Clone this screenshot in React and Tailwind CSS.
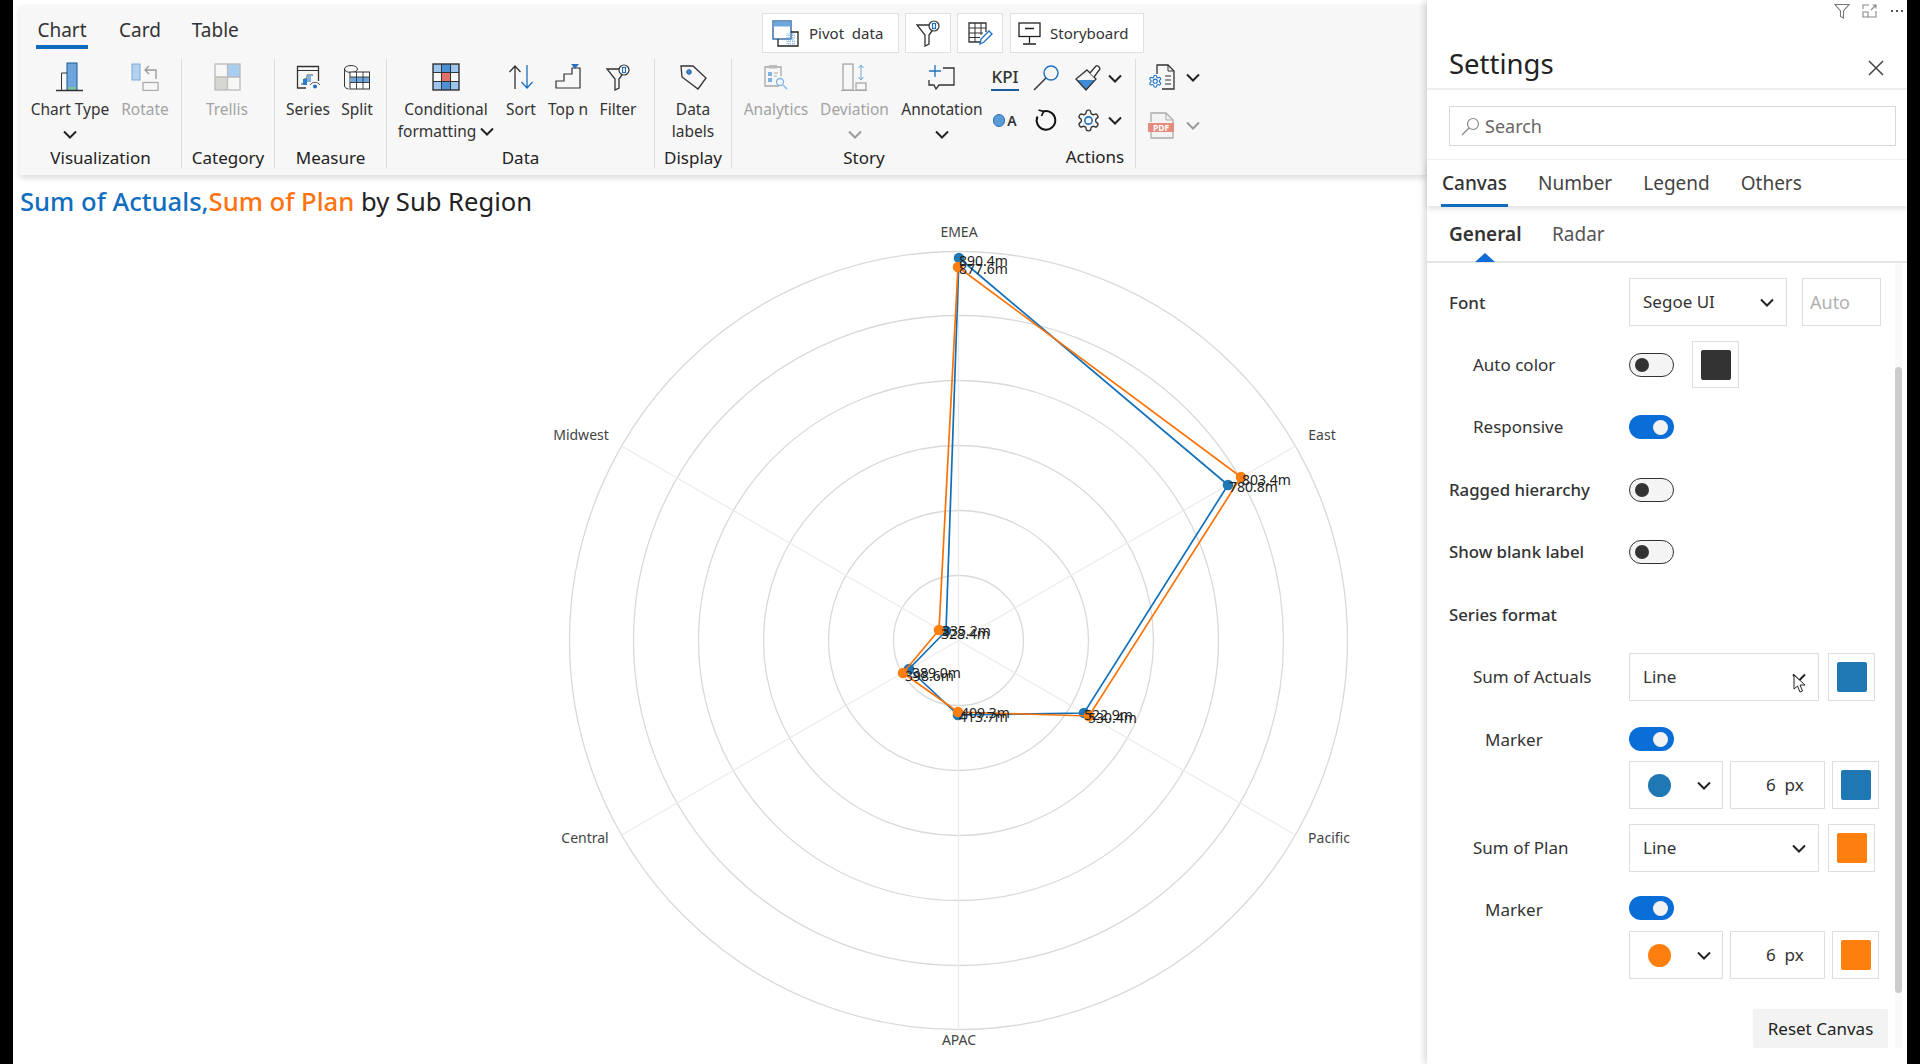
import React from "react";

const BLUE = "#1f77b4";
const ORANGE = "#ff7f0e";

const Chevron = ({ muted }) => (
  <svg width="14" height="9" viewBox="0 0 14 9" fill="none" stroke={muted ? "#999" : "#222"} strokeWidth="2">
    <path d="M1 1.5l6 6 6-6" />
  </svg>
);

// ribbon icons
const ChartTypeIcon = () => (
  <svg width="28" height="30" viewBox="0 0 28 30" fill="none">
    <rect x="11" y="1" width="10" height="27" fill="#6ea6dc" stroke="#1b5a9a" />
    <rect x="12" y="25" width="8" height="3" fill="#7fc49a" />
    <path d="M5.5 28V11H11" stroke="#333" />
    <path d="M0 28.5h27" stroke="#333" strokeWidth="1.5" />
  </svg>
);
const RotateIcon = () => (
  <svg width="29" height="28" viewBox="0 0 29 28" fill="none">
    <rect x="1" y="1" width="8" height="16" fill="#b4d2f0" stroke="#7aa8d4" />
    <path d="M25 16V7H14M18 3l-4 4 4 4" stroke="#999" strokeWidth="1.3" />
    <rect x="12" y="19.5" width="15" height="8" stroke="#aaa" strokeWidth="1.3" />
  </svg>
);
const TrellisIcon = () => (
  <svg width="27" height="28" viewBox="0 0 27 28" fill="none">
    <rect x="13.5" y="1" width="12.5" height="13" fill="#a9cdef" />
    <rect x="1" y="14" width="12.5" height="13" fill="#d8d6d3" />
    <rect x="1" y="1" width="25" height="26" stroke="#bbb" strokeWidth="1.3" />
    <path d="M13.5 1v26M1 14h25" stroke="#bbb" strokeWidth="1.3" />
  </svg>
);
const SeriesIcon = () => (
  <svg width="25" height="25" viewBox="0 0 25 25" fill="none">
    <path d="M10 23H1.5V1.5h21V16" stroke="#333" strokeWidth="1.3" />
    <path d="M1.5 5.5h21" stroke="#333" />
    <path d="M5 19h3v-5h3v-4h6" stroke="#444" />
    <rect x="7" y="14" width="4" height="6" fill="#2b7cc9" />
    <rect x="11" y="10" width="4" height="7" fill="#7fb2e5" />
    <circle cx="19" cy="21.5" r="2" fill="#1d6fc2" />
    <path d="M14 20a6 6 0 0 1 10 0" stroke="#555" />
  </svg>
);
const SplitIcon = () => (
  <svg width="28" height="27" viewBox="0 0 28 27" fill="none">
    <ellipse cx="8" cy="5" rx="6.5" ry="3.5" stroke="#333" />
    <path d="M1.5 5v17c0 1.5 2 2.5 4 3" stroke="#333" />
    <rect x="7" y="8" width="19.5" height="17" fill="#fff" stroke="#333" />
    <rect x="7.5" y="13" width="18.5" height="5.5" fill="#6ea6dc" />
    <path d="M13.5 8v17M20 8v17M7 13h19.5M7 18.5h19.5" stroke="#333" strokeWidth=".9" />
  </svg>
);
const CondIcon = () => (
  <svg width="28" height="28" viewBox="0 0 28 28" fill="none">
    <rect x="9.5" y="1" width="9" height="26" fill="#4c90d6" />
    <rect x="1" y="1" width="8.5" height="8.5" fill="#9cc6ee" />
    <rect x="18.5" y="1" width="8.5" height="8.5" fill="#9cc6ee" />
    <rect x="1" y="18.5" width="8.5" height="8.5" fill="#9cc6ee" />
    <rect x="18.5" y="18.5" width="8.5" height="8.5" fill="#9cc6ee" />
    <rect x="9.5" y="10" width="9" height="8" fill="#e2706a" />
    <rect x="1" y="1" width="26" height="26" stroke="#333" strokeWidth="1.4" />
    <path d="M9.5 1v26M18.5 1v26M1 9.5h26M1 18.5h26" stroke="#333" />
  </svg>
);
const SortIcon = () => (
  <svg width="26" height="26" viewBox="0 0 26 26" fill="none" strokeWidth="1.3">
    <path d="M7 25V2M1.5 8L7 2l5.5 6" stroke="#333" />
    <path d="M19 1v23M13.5 18l5.5 6 5.5-6" stroke="#1d6fc2" />
  </svg>
);
const TopNIcon = () => (
  <svg width="27" height="26" viewBox="0 0 27 26" fill="none">
    <path d="M1 25v-7h8v-7h8V5h8v20z" stroke="#333" strokeWidth="1.2" transform="translate(0 -1)" />
    <path d="M16 0h8l-4 5z" fill="#2b6fb8" />
  </svg>
);
const FunnelLens = ({ blue = "#1d6fc2" }) => (
  <svg width="25" height="27" viewBox="0 0 25 27" fill="none">
    <path d="M14 5H1l8 10v11l4-2v-9l3-4" stroke="#333" strokeWidth="1.3" />
    <circle cx="18" cy="6" r="5" fill="#fff" stroke="#333" strokeWidth="1.2" />
    <rect x="16.5" y="3.5" width="3" height="5" fill="#fff" stroke={blue} strokeWidth="1.2" />
  </svg>
);
const TagIcon = () => (
  <svg width="29" height="25" viewBox="0 0 29 25" fill="none">
    <path d="M2 1h12l13 12-8 11L3 12z" stroke="#333" strokeWidth="1.3" />
    <circle cx="10" cy="7" r="2.3" fill="#3f8bd6" stroke="#1d5c9e" />
  </svg>
);
const AnalyticsIcon = () => (
  <svg width="26" height="26" viewBox="0 0 26 26" fill="none">
    <path d="M16 22H2V3h16v9" stroke="#a8a8a8" strokeWidth="1.3" />
    <rect x="6" y="1" width="8" height="3.5" fill="#bbb" />
    <rect x="5" y="8" width="4" height="4" fill="#7fb2e5" />
    <rect x="5" y="14" width="4" height="4" fill="#7fb2e5" />
    <path d="M11 9h4M11 12h3" stroke="#aaa" />
    <circle cx="17" cy="18" r="3.5" stroke="#7fb2e5" strokeWidth="1.3" />
    <path d="M20 21l4 4" stroke="#7fb2e5" strokeWidth="1.3" />
  </svg>
);
const DeviationIcon = () => (
  <svg width="27" height="28" viewBox="0 0 27 28" fill="none">
    <rect x="2" y="1" width="10" height="26" stroke="#a8a8a8" strokeWidth="1.3" />
    <rect x="15" y="20" width="10" height="7" stroke="#a8a8a8" strokeWidth="1.3" />
    <path d="M0 27.5h26" stroke="#a8a8a8" />
    <path d="M20 2v15M17.5 5L20 2l2.5 3M17.5 14l2.5 3 2.5-3" stroke="#6ea6dc" />
  </svg>
);
const AnnotationIcon = () => (
  <svg width="28" height="26" viewBox="0 0 28 26" fill="none">
    <path d="M15 4h11v17H11l-3 4-2-4H1v-5" stroke="#333" strokeWidth="1.3" />
    <path d="M7 1v12M1 7h12" stroke="#1d6fc2" strokeWidth="1.3" />
  </svg>
);
const LensIcon = () => (
  <svg width="26" height="26" viewBox="0 0 26 26" fill="none">
    <circle cx="18" cy="8" r="7" stroke="#1d6fc2" strokeWidth="1.4" />
    <path d="M13 13L1 25" stroke="#333" strokeWidth="1.4" />
  </svg>
);
const BrushIcon = () => (
  <svg width="26" height="26" viewBox="0 0 26 26" fill="none">
    <path d="M2.5 15h17L11 25z" fill="#3f8bd6" />
    <path d="M12 5l9 9-10 11L1 14z" stroke="#333" strokeWidth="1.3" />
    <path d="M15 8l6-7c1-1 4 1 4 3l-6 8" fill="#fff" stroke="#333" strokeWidth="1.3" />
  </svg>
);
const RefreshIcon = () => (
  <svg width="24" height="24" viewBox="0 0 24 24" fill="none" stroke="#111" strokeWidth="2">
    <path d="M9 3.5a9.3 9.3 0 1 1-5.5 5" />
    <path d="M4.5 2L9.5 3.5 7.5 8" strokeWidth="1.7" />
  </svg>
);
const GearIcon = ({ size = 24 }) => (
  <svg width={size} height={size} viewBox="0 0 24 24" fill="none" stroke="#333" strokeWidth="1.3">
    <path d="M12.22 2h-.44a2 2 0 0 0-2 2v.18a2 2 0 0 1-1 1.73l-.43.25a2 2 0 0 1-2 0l-.15-.08a2 2 0 0 0-2.73.73l-.22.38a2 2 0 0 0 .73 2.73l.15.1a2 2 0 0 1 1 1.72v.51a2 2 0 0 1-1 1.74l-.15.09a2 2 0 0 0-.73 2.73l.22.38a2 2 0 0 0 2.73.73l.15-.08a2 2 0 0 1 2 0l.43.25a2 2 0 0 1 1 1.73V20a2 2 0 0 0 2 2h.44a2 2 0 0 0 2-2v-.18a2 2 0 0 1 1-1.73l.43-.25a2 2 0 0 1 2 0l.15.08a2 2 0 0 0 2.73-.73l.22-.39a2 2 0 0 0-.73-2.73l-.15-.08a2 2 0 0 1-1-1.74v-.5a2 2 0 0 1 1-1.74l.15-.09a2 2 0 0 0 .73-2.73l-.22-.38a2 2 0 0 0-2.73-.73l-.15.08a2 2 0 0 1-2 0l-.43-.25a2 2 0 0 1-1-1.73V4a2 2 0 0 0-2-2z" />
    <circle cx="12" cy="12" r="3.5" stroke="#1d6fc2" strokeWidth="1.5" />
  </svg>
);
const DocGearIcon = () => (
  <svg width="28" height="26" viewBox="0 0 28 26" fill="none">
    <path d="M9 10V1h11l6 6v18H14" stroke="#333" strokeWidth="1.3" />
    <path d="M20 1v6h6M17 12h6M17 16h6M17 20h6" stroke="#333" />
    <g transform="translate(0 10) scale(.6)">
      <path d="M12.22 2h-.44a2 2 0 0 0-2 2v.18a2 2 0 0 1-1 1.73l-.43.25a2 2 0 0 1-2 0l-.15-.08a2 2 0 0 0-2.73.73l-.22.38a2 2 0 0 0 .73 2.73l.15.1a2 2 0 0 1 1 1.72v.51a2 2 0 0 1-1 1.74l-.15.09a2 2 0 0 0-.73 2.73l.22.38a2 2 0 0 0 2.73.73l.15-.08a2 2 0 0 1 2 0l.43.25a2 2 0 0 1 1 1.73V20a2 2 0 0 0 2 2h.44a2 2 0 0 0 2-2v-.18a2 2 0 0 1 1-1.73l.43-.25a2 2 0 0 1 2 0l.15.08a2 2 0 0 0 2.73-.73l.22-.39a2 2 0 0 0-.73-2.73l-.15-.08a2 2 0 0 1-1-1.74v-.5a2 2 0 0 1 1-1.74l.15-.09a2 2 0 0 0 .73-2.73l-.22-.38a2 2 0 0 0-2.73-.73l-.15.08a2 2 0 0 1-2 0l-.43-.25a2 2 0 0 1-1-1.73V4a2 2 0 0 0-2-2z" fill="#fff" stroke="#1d6fc2" strokeWidth="1.8" />
      <circle cx="12" cy="12" r="3.5" stroke="#1d6fc2" strokeWidth="1.8" />
    </g>
  </svg>
);
const PdfIcon = () => (
  <svg width="28" height="27" viewBox="0 0 28 27" fill="none">
    <path d="M3 10V1h15l7 7v18H3v-6" fill="#f3f3f3" stroke="#aaa" strokeWidth="1.3" />
    <path d="M18 1v7h7" stroke="#aaa" />
    <rect x="0" y="11" width="26" height="9" fill="#e58a7c" />
    <text x="13" y="18.5" textAnchor="middle" fontSize="8.5" fontWeight="700" fill="#fff">PDF</text>
  </svg>
);
const PivotIcon = () => (
  <svg width="27" height="27" viewBox="0 0 27 27" fill="none">
    <rect x="1" y="1" width="18" height="18" fill="#fff" stroke="#1d5c9e" strokeWidth="1.3" />
    <rect x="1.5" y="1.5" width="17" height="5" fill="#6ea6dc" />
    <path d="M6 19v7h20V12h-7" stroke="#222" strokeWidth="1.3" />
    <path d="M16 15h8M16 18h8M16 21h8M16 24h8M15 13v11M18 13v11M21 13v11" stroke="#6ea6dc" strokeDasharray="1 1" />
  </svg>
);
const TableEditIcon = () => (
  <svg width="25" height="23" viewBox="0 0 25 23" fill="none">
    <path d="M12 20H1V1h17v9" stroke="#333" strokeWidth="1.3" />
    <path d="M1 6h17M1 11h14M1 15.5h11M7 1v19M13 1v12" stroke="#333" />
    <path d="M12 22l1-5 8-8 3 3-8 8z" fill="#fff" stroke="#1d6fc2" strokeWidth="1.3" />
  </svg>
);
const BoardIcon = () => (
  <svg width="23" height="23" viewBox="0 0 23 23" fill="none" stroke="#222" strokeWidth="1.3">
    <rect x="1" y="1" width="21" height="13.5" />
    <path d="M7 6.5h9M11.5 14.5V21M5 22h13" />
  </svg>
);

const Tool = ({ w, icon, label, second, chevron, muted }) => (
  <div className={`flex flex-col items-center ${w}`}>
    <div className="h-[36px] flex items-center justify-center">{icon}</div>
    <div className={`mt-[3px] leading-[22px] whitespace-nowrap text-center ${muted ? "text-[#a3a3a3]" : "text-[#333]"}`}>
      {label}
      {second && <div>{second}</div>}
    </div>
    {chevron && (
      <div className="mt-[7px] h-[14px] flex items-center">
        <Chevron muted={muted} />
      </div>
    )}
  </div>
);

const Group = ({ className, label, labelClass, children }) => (
  <div className={`h-[109px] flex flex-col ${className}`}>
    <div className="h-[89px] flex">{children}</div>
    <div className={`h-[20px] leading-[20px] text-center text-[17px] text-[#222] whitespace-nowrap ${labelClass || ""}`}>{label}</div>
  </div>
);

const TopButton = ({ className, children }) => (
  <div className={`h-[40px] bg-white border border-[#e0e0e0] flex items-center text-[15px] text-[#333] ${className}`}>{children}</div>
);

const Ribbon = () => (
  <div className="mt-[5px] h-[170px] bg-[#f7f7f7] shadow-[0_3px_6px_rgba(0,0,0,0.14)] text-[15.5px] relative z-[1]">
    <div className="h-[54px] flex">
      <div className="w-[742px] flex pl-[16px] text-[19px] text-[#333]">
        <div className="h-[44px] w-[52px] pt-[13px] leading-[24px] text-center border-b-4 border-[#0f6cbd]">Chart</div>
        <div className="h-[44px] ml-[31px] pt-[13px] leading-[24px]">Card</div>
        <div className="h-[44px] ml-[31px] pt-[13px] leading-[24px]">Table</div>
      </div>
      <div className="flex gap-[6px] mt-[8px]">
        <TopButton className="w-[137px] pl-[9px]">
          <PivotIcon />
          <span className="ml-[10px] mt-[1px] whitespace-pre">Pivot  data</span>
        </TopButton>
        <TopButton className="w-[46px] justify-center"><FunnelLens /></TopButton>
        <TopButton className="w-[46px] justify-center"><TableEditIcon /></TopButton>
        <TopButton className="w-[134px] pl-[7px] ml-[1px]">
          <BoardIcon />
          <span className="ml-[9px] mt-[1px]">Storyboard</span>
        </TopButton>
      </div>
    </div>
    <div className="flex">
      <Group className="w-[162px] border-r border-[#ddd]" label="Visualization">
        <div className="w-[10px]" />
        <Tool w="w-[80px]" icon={<ChartTypeIcon />} label="Chart Type" chevron />
        <div className="w-[5px]" />
        <Tool w="w-[60px]" icon={<RotateIcon />} label="Rotate" muted />
      </Group>
      <Group className="w-[93px] border-r border-[#ddd]" label="Category">
        <div className="w-[15px]" />
        <Tool w="w-[60px]" icon={<TrellisIcon />} label="Trellis" muted />
      </Group>
      <Group className="w-[112px] border-r border-[#ddd]" label="Measure">
        <div className="w-[8px]" />
        <Tool w="w-[50px]" icon={<SeriesIcon />} label="Series" />
        <Tool w="w-[48px]" icon={<SplitIcon />} label="Split" />
      </Group>
      <Group className="w-[268px] border-r border-[#ddd]" label="Data">
        <div className="w-[4px]" />
        <Tool
          w="w-[110px]"
          icon={<CondIcon />}
          label="Conditional"
          second={
            <span className="inline-flex items-center gap-[4px]">
              formatting <Chevron />
            </span>
          }
        />
        <Tool w="w-[40px]" icon={<SortIcon />} label="Sort" />
        <Tool w="w-[54px]" icon={<TopNIcon />} label="Top n" />
        <Tool w="w-[46px]" icon={<FunnelLens />} label="Filter" />
      </Group>
      <Group className="w-[77px] border-r border-[#ddd]" label="Display">
        <div className="w-[8px]" />
        <Tool w="w-[60px]" icon={<TagIcon />} label="Data" second="labels" />
      </Group>
      <Group className="w-[257px]" label="Story" labelClass="w-[264px]">
        <div className="w-[6px]" />
        <Tool w="w-[76px]" icon={<AnalyticsIcon />} label="Analytics" muted />
        <Tool w="w-[81px]" icon={<DeviationIcon />} label="Deviation" chevron muted />
        <Tool w="w-[94px]" icon={<AnnotationIcon />} label="Annotation" chevron />
      </Group>
      <Group className="w-[147px] border-r border-[#ddd]" label="Actions" labelClass="w-[212px] -mt-px">
        <div className="flex flex-col gap-[4px]">
          <div className="flex h-[38px] items-center">
            <div className="w-[32px] flex justify-center">
              <span className="font-medium text-[17px] leading-[24px] border-b-2 border-[#1d5c9e] text-[#333]">KPI</span>
            </div>
            <div className="w-[50px] flex justify-center"><LensIcon /></div>
            <div className="w-[34px] flex justify-center"><BrushIcon /></div>
            <div className="w-[20px] flex justify-center"><Chevron /></div>
          </div>
          <div className="flex h-[38px] items-center">
            <div className="w-[32px] flex justify-center items-center gap-[2px]">
              <span className="w-[12px] h-[13px] rounded-full bg-[#5b9bd5] border border-[#2b6fb8]" />
              <span className="font-semibold text-[14px] text-[#333]">A</span>
            </div>
            <div className="w-[50px] flex justify-center"><RefreshIcon /></div>
            <div className="w-[34px] flex justify-center"><GearIcon size={25} /></div>
            <div className="w-[20px] flex justify-center"><Chevron /></div>
          </div>
        </div>
      </Group>
      <div className="pl-[12px] flex flex-col">
        <div className="h-[36px] flex items-center">
          <DocGearIcon />
          <div className="w-[34px] flex justify-center"><Chevron /></div>
        </div>
        <div className="h-[36px] mt-[12px] flex items-center">
          <PdfIcon />
          <div className="w-[34px] flex justify-center"><Chevron muted /></div>
        </div>
      </div>
    </div>
  </div>
);

const CENTER = { x: 958.5, y: 640.5 };
const AXES = [0, 60, 120, 180, 240, 300];
const RINGS = [65, 130, 195, 260, 325, 389];
const AXIS_LABELS = [
  { text: "EMEA", x: 959, y: 231 },
  { text: "East", x: 1322, y: 434 },
  { text: "Pacific", x: 1329, y: 837 },
  { text: "APAC", x: 959, y: 1039 },
  { text: "Central", x: 585, y: 837 },
  { text: "Midwest", x: 581, y: 434 },
];
const SERIES = [
  {
    color: BLUE,
    line: "#1270b8",
    points: [
      { x: 959, y: 258, label: "890.4m", lx: 959, ly: 260 },
      { x: 1228, y: 485, label: "780.8m", lx: 1229, ly: 486 },
      { x: 1084, y: 713, label: "522.9m", lx: 1084, ly: 714 },
      { x: 958, y: 715, label: "413.7m", lx: 959, ly: 716 },
      { x: 909, y: 669, label: "389.0m", lx: 912, ly: 672 },
      { x: 946, y: 631, label: "328.4m", lx: 941, ly: 633 },
    ],
  },
  {
    color: ORANGE,
    line: "#fb7308",
    points: [
      { x: 958, y: 267, label: "877.6m", lx: 959, ly: 268 },
      { x: 1241, y: 477, label: "803.4m", lx: 1242, ly: 479 },
      { x: 1089, y: 716, label: "530.4m", lx: 1088, ly: 717 },
      { x: 958, y: 712, label: "409.3m", lx: 961, ly: 712 },
      { x: 903, y: 673, label: "398.6m", lx: 905, ly: 675 },
      { x: 939, y: 630, label: "335.2m", lx: 942, ly: 630 },
    ],
  },
];

const Radar = () => (
  <svg viewBox="13 225 1414 839" className="w-[1414px] h-[839px] block">
    {RINGS.map((r) => (
      <circle key={r} cx={CENTER.x} cy={CENTER.y} r={r} fill="none" stroke="#d9d9d9" strokeWidth="1.3" />
    ))}
    {AXES.map((deg) => {
      const a = (deg * Math.PI) / 180;
      return (
        <line
          key={deg}
          x1={CENTER.x}
          y1={CENTER.y}
          x2={CENTER.x + 389 * Math.sin(a)}
          y2={CENTER.y - 389 * Math.cos(a)}
          stroke="#ececec"
          strokeWidth="1.3"
        />
      );
    })}
    {AXIS_LABELS.map((l) => (
      <text key={l.text} x={l.x} y={l.y} textAnchor="middle" dominantBaseline="central" fontSize="14" fill="#444">
        {l.text}
      </text>
    ))}
    {SERIES.map((s) => (
      <g key={s.color}>
        <polygon points={s.points.map((p) => `${p.x},${p.y}`).join(" ")} fill="none" stroke={s.line} strokeWidth="1.7" />
        {s.points.map((p) => (
          <circle key={p.label} cx={p.x} cy={p.y} r="5.3" fill={s.color} />
        ))}
      </g>
    ))}
    {SERIES.map((s) =>
      s.points.map((p) => (
        <text key={p.label} x={p.lx} y={p.ly} dominantBaseline="central" fontSize="14" fill="#222">
          {p.label}
        </text>
      ))
    )}
  </svg>
);

const Toggle = ({ on }) =>
  on ? (
    <div className="w-[45px] h-[24px] rounded-full bg-[#0a6ed8] flex items-center justify-end pr-[6px]">
      <div className="w-[15px] h-[15px] rounded-full bg-[#f3f3f3]" />
    </div>
  ) : (
    <div className="w-[45px] h-[24px] rounded-full bg-[#f4f4f4] border-[1.5px] border-[#333] flex items-center pl-[5px]">
      <div className="w-[14px] h-[14px] rounded-full bg-[#333]" />
    </div>
  );

const Box = ({ className, children }) => (
  <div className={`bg-white border border-[#dedede] flex items-center ${className}`}>{children}</div>
);

const Swatch = ({ color, className }) => (
  <Box className={`w-[47px] h-[48px] justify-center ${className || ""}`}>
    <div className="w-[30px] h-[30px] rounded-[2px]" style={{ background: color }} />
  </Box>
);

const Select = ({ value, className, cursor }) => (
  <Box className={`h-[48px] pl-[13px] pr-[12px] justify-between relative ${className}`}>
    <span>{value}</span>
    <Chevron />
    {cursor && (
      <svg width="14" height="19" viewBox="0 0 14 19" className="absolute left-[163px] top-[20px]">
        <path d="M1 1v14l3.5-3 2.5 6 2.5-1-2.5-6H12z" fill="#fff" stroke="#222" strokeWidth="1" />
      </svg>
    )}
  </Box>
);

const MarkerControls = ({ color, className }) => (
  <div className={`flex ${className}`}>
    <div className="w-[180px]" />
    <Box className="w-[94px] h-[48px] pl-[18px]">
      <div className="w-[23px] h-[23px] rounded-full" style={{ background: color }} />
      <div className="ml-[26px]"><Chevron /></div>
    </Box>
    <Box className="w-[95px] h-[48px] ml-[7px] pl-[35px] whitespace-pre">6  px</Box>
    <Swatch color={color} className="ml-[7px]" />
  </div>
);

const Row = ({ label, labelClass, className, children }) => (
  <div className={`flex items-center ${className}`}>
    <div className={`w-[180px] whitespace-nowrap ${labelClass || ""}`}>{label}</div>
    {children}
  </div>
);

const SettingsPanel = () => (
  <div className="w-[480px] h-[1064px] bg-white relative z-[2] shadow-[-3px_0_6px_rgba(0,0,0,0.14)] text-[#333]">
    <div className="h-[90px] border-b-2 border-[#eeeeee] relative">
      <div className="h-[22px] flex items-center justify-end pr-[4px]">
        <svg width="16" height="16" viewBox="0 0 16 16" fill="none" stroke="#777" strokeWidth="1.1">
          <path d="M1 1.5h14L9.5 8v7l-3-1.5V8z" />
        </svg>
        <svg width="15" height="14" viewBox="0 0 15 14" fill="none" stroke="#888" strokeWidth="1.1" className="ml-[12px]">
          <path d="M1 5V1h6M14 7v6H1V8h5v5M9 6l5-5M10.5 1H14v3.5" />
        </svg>
        <span className="flex gap-[3px] ml-[14px]">
          <i className="w-[2px] h-[2px] bg-[#555]" />
          <i className="w-[2px] h-[2px] bg-[#555]" />
          <i className="w-[2px] h-[2px] bg-[#555]" />
        </span>
      </div>
      <div className="flex items-center pl-[22px] pr-[22px] mt-[22px] justify-between">
        <span className="text-[27.5px] leading-[40px] text-[#222]">Settings</span>
        <svg width="18" height="18" viewBox="0 0 18 18" stroke="#444" strokeWidth="1.5" className="mt-[7px]">
          <path d="M2 2l14 14M16 2L2 16" />
        </svg>
      </div>
    </div>
    <div className="h-[70px] pt-[16px] pl-[22px] border-b border-[#f2f2f2]">
      <div className="w-[447px] h-[40px] border border-[#d9d9d9] flex items-center pl-[11px] text-[18px] text-[#666]">
        <svg width="19" height="19" viewBox="0 0 19 19" fill="none" stroke="#888" strokeWidth="1.2">
          <circle cx="12" cy="7" r="5.5" />
          <path d="M8 11l-7 7" />
        </svg>
        <span className="ml-[5px] mt-[1px]">Search</span>
      </div>
    </div>
    <div className="h-[46px] flex pl-[14px] text-[19px] text-[#444] shadow-[0_3px_5px_rgba(0,0,0,0.12)] relative">
      <div className="h-[47px] w-[67px] leading-[46px] text-center text-[#333] border-b-[3px] border-[#0f6cbd] font-medium">Canvas</div>
      <div className="ml-[30px] leading-[46px]">Number</div>
      <div className="ml-[31px] leading-[46px]">Legend</div>
      <div className="ml-[31px] leading-[46px]">Others</div>
    </div>
    <div className="h-[57px] flex pl-[22px] text-[19px] text-[#555] border-b-2 border-[#e5e5e5] relative">
      <div className="font-semibold text-[#333] leading-[56px] relative w-[72px] whitespace-nowrap">
        General
        <div className="absolute left-[26px] top-[47px] w-0 h-0 border-x-[10px] border-x-transparent border-b-[9px] border-b-[#0f6cd6]" />
      </div>
      <div className="ml-[31px] leading-[56px]">Radar</div>
    </div>
    <div className="relative pl-[22px] text-[17px]">
      <div className="absolute right-[5px] top-0 h-[785px] w-[7px] bg-[#f9f9f9]">
        <div className="mt-[104px] h-[626px] rounded-full bg-[#cccccc]" />
      </div>
      <Row label="Font" labelClass="font-medium mt-[2px]" className="pt-[15px]">
        <Select value="Segoe UI" className="w-[158px]" />
        <Box className="w-[79px] h-[48px] ml-[15px] pl-[7px] text-[#b0b0b0] text-[18px]">Auto</Box>
      </Row>
      <Row label="Auto color" labelClass="pl-[24px]" className="mt-[15px] h-[47px]">
        <Toggle />
        <Box className="w-[47px] h-[47px] ml-[18px] justify-center">
          <div className="w-[30px] h-[30px] rounded-[2px] bg-[#333]" />
        </Box>
      </Row>
      <Row label="Responsive" labelClass="pl-[24px]" className="mt-[27px] h-[24px]"><Toggle on /></Row>
      <Row label="Ragged hierarchy" labelClass="font-medium text-[16.8px]" className="mt-[39px] h-[24px]"><Toggle /></Row>
      <Row label="Show blank label" labelClass="font-medium text-[16.8px]" className="mt-[38px] h-[24px]"><Toggle /></Row>
      <Row label="Series format" labelClass="font-medium text-[16.8px]" className="mt-[39px] h-[24px]" />
      <Row label="Sum of Actuals" labelClass="pl-[24px]" className="mt-[26px]">
        <Select value="Line" className="w-[190px]" cursor />
        <Swatch color={BLUE} className="ml-[9px]" />
      </Row>
      <Row label="Marker" labelClass="pl-[36px] mt-[2px]" className="mt-[26px] h-[24px]"><Toggle on /></Row>
      <MarkerControls color={BLUE} className="mt-[10px]" />
      <Row label="Sum of Plan" labelClass="pl-[24px]" className="mt-[15px]">
        <Select value="Line" className="w-[190px]" />
        <Swatch color={ORANGE} className="ml-[9px]" />
      </Row>
      <Row label="Marker" labelClass="pl-[36px] mt-[4px]" className="mt-[24px] h-[24px]"><Toggle on /></Row>
      <MarkerControls color={ORANGE} className="mt-[11px]" />
      <div className="flex justify-end mt-[30px] pr-[19px]">
        <div className="w-[135px] h-[39px] bg-[#f3f3f3] rounded-[2px] flex items-center justify-center text-[#222]">Reset Canvas</div>
      </div>
    </div>
  </div>
);

export default function App() {
  return (
    <div className="w-[1920px] h-[1064px] flex overflow-hidden bg-black font-['Noto_Sans','Open_Sans',sans-serif]">
      <div className="w-[13px]" />
      <div className="w-[1414px] bg-white pl-[7px]">
        <Ribbon />
        <div className="h-[50px] pt-[10px] text-[25.6px] leading-[34px] whitespace-nowrap text-[#222]">
          <span className="text-[#106ebe] font-medium">Sum of Actuals,</span>
          <span className="text-[#ff7410] font-medium">Sum of Plan</span> by Sub Region
        </div>
        <div className="-ml-[7px]">
          <Radar />
        </div>
      </div>
      <SettingsPanel />
    </div>
  );
}
